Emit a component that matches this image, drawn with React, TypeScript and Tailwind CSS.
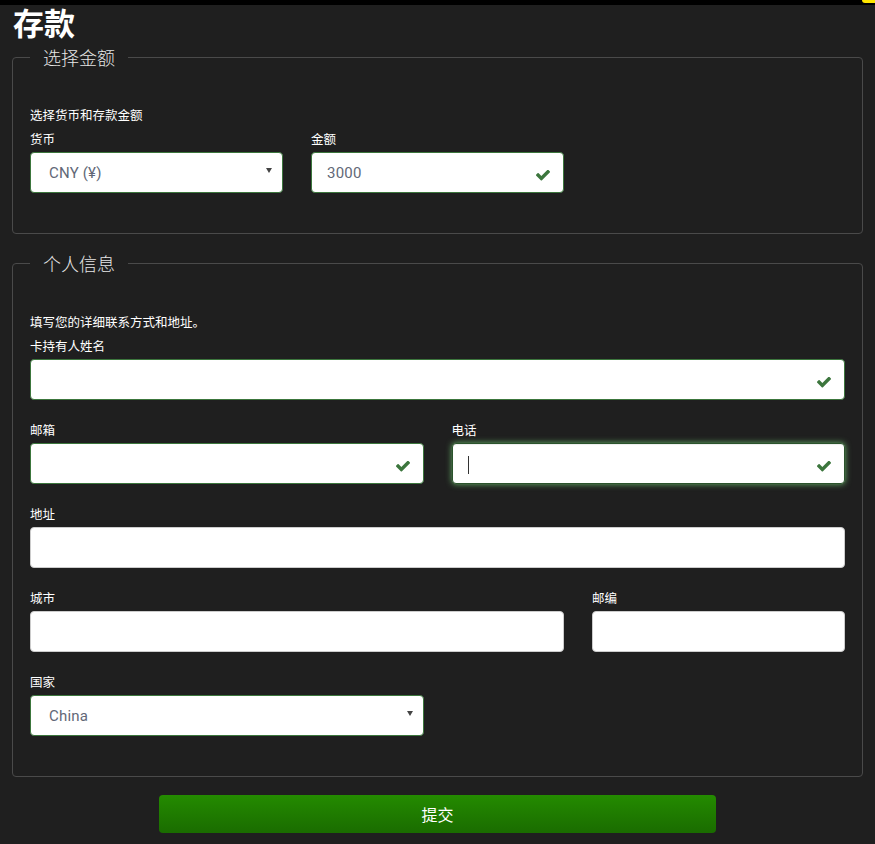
import React from "react";

const cjk = "font-['Noto_Sans_CJK_SC',sans-serif]";
const latin = "font-['Roboto','Noto_Sans_CJK_SC',sans-serif]";

function Check() {
  return (
    <svg
      viewBox="121 400 1550 1130"
      className="w-[14px] h-[11px] mt-[6px] shrink-0"
      fill="#3c763d"
    >
      <path d="M1671 566q0 40-28 68l-724 724-136 136q-28 28-68 28t-68-28l-136-136-362-362q-28-28-28-68t28-68l136-136q28-28 68-28t68 28l294 295 656-657q28-28 68-28t68 28l136 136q28 28 28 68z" />
    </svg>
  );
}

function Caret() {
  return (
    <svg viewBox="0 0 6 5" className="w-[6px] h-[5px] shrink-0 mt-[-4px]" fill="#444">
      <path d="M0 0h6L3 5z" />
    </svg>
  );
}

function Field({
  label,
  value,
  ok,
  focused,
  select,
  className = "",
}: {
  label: string;
  value?: string;
  ok?: boolean;
  focused?: boolean;
  select?: boolean;
  className?: string;
}) {
  const border = focused
    ? "border-[#2b542c] shadow-[inset_0_1px_1px_rgba(0,0,0,.075),0_0_6px_#67b168]"
    : ok || select
    ? "border-[#3c763d]"
    : "border-[#cccccc]";
  return (
    <div className={className}>
      <div className={`${cjk} text-[12.5px] leading-[17px] text-white mb-[5px]`}>{label}</div>
      <div
        className={`h-[41px] bg-white rounded-[4px] border ${border} flex items-center justify-between ${
          select ? "pl-[18px] pr-[10px]" : "pl-[15px] pr-[13px]"
        }`}
      >
        <div className={`${latin} text-[15px] tracking-[0.2px] text-[#626877] flex items-center pt-[2px]`}>
          {focused ? <span className="block w-px h-[18px] bg-[#333]" /> : value}
        </div>
        {select ? <Caret /> : ok ? <Check /> : null}
      </div>
    </div>
  );
}

function Section({
  title,
  top,
  children,
}: {
  title: string;
  top: string;
  children: React.ReactNode;
}) {
  return (
    <fieldset className={`mx-[12px] border border-[#4a4a4a] rounded-[4px] px-[17px] ${top} pb-[40px]`}>
      <legend className={`${cjk} px-[13px] text-[18px] leading-[24px] text-[#e6e6e6] font-light`}>
        {title}
      </legend>
      {children}
    </fieldset>
  );
}

export default function App() {
  return (
    <div className="min-h-screen bg-[#1f1f1f] pb-[10px]">
      <div className="h-[5px] bg-black flex justify-end">
        <div className="w-[13px] h-[3px] bg-[#ffe600] rounded-bl-[3px]" />
      </div>

      <h1 className={`${cjk} text-[31px] leading-[34px] font-bold text-white px-[13px] mb-[6px]`}>
        存款
      </h1>

      <Section title="选择金额" top="pt-[36px]">
        <p className={`${cjk} text-[12.5px] leading-[20px] text-white mb-[5px]`}>选择货币和存款金额</p>
        <div className="grid grid-cols-3 gap-x-[28px]">
          <Field label="货币" value="CNY (¥)" select />
          <Field label="金额" value="3000" ok />
        </div>
      </Section>

      <div className="h-[17px]" />

      <Section title="个人信息" top="pt-[37px]">
        <p className={`${cjk} text-[12.5px] leading-[20px] text-white mb-[5px]`}>
          填写您的详细联系方式和地址。
        </p>
        <div className="grid grid-cols-6 gap-x-[28px] gap-y-[21px]">
          <Field label="卡持有人姓名" ok className="col-span-6" />
          <Field label="邮箱" ok className="col-span-3" />
          <Field label="电话" ok focused className="col-span-3" />
          <Field label="地址" className="col-span-6" />
          <Field label="城市" className="col-span-4" />
          <Field label="邮编" className="col-span-2" />
          <Field label="国家" value="China" select className="col-span-3" />
        </div>
      </Section>

      <button
        className={`${cjk} block mx-auto mt-[18px] w-[557px] h-[38px] rounded-[4px] bg-gradient-to-b from-[#248b00] to-[#1a6c00] text-white text-[16px]`}
      >
        提交
      </button>
    </div>
  );
}
